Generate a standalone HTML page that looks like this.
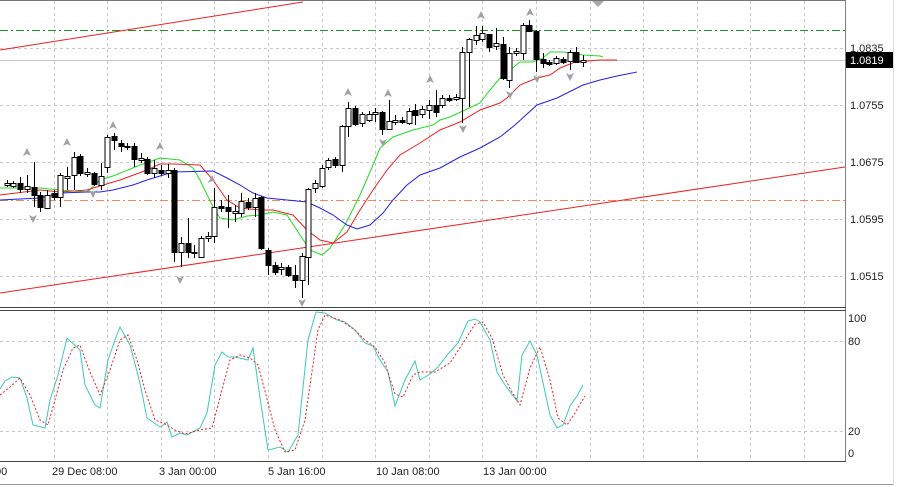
<!DOCTYPE html>
<html><head><meta charset="utf-8"><style>
html,body{margin:0;padding:0;background:#fff;}
svg{display:block;font-family:"Liberation Sans",Tahoma,sans-serif;}
</style></head><body>
<svg id="s" width="900" height="487" viewBox="0 0 900 487" xmlns="http://www.w3.org/2000/svg">
<rect width="900" height="487" fill="#fff"/>
<g id="grid" stroke="#c8c8c8" stroke-dasharray="3,3" stroke-width="1"></g>
<!-- frame -->
<line x1="845.5" y1="0" x2="845.5" y2="462" stroke="#808080"/>
<line x1="0" y1="307.5" x2="846" y2="307.5" stroke="#444"/>
<line x1="0" y1="310.5" x2="846" y2="310.5" stroke="#444"/>
<line x1="0" y1="461.5" x2="846" y2="461.5" stroke="#444"/>
<line x1="0" y1="0.5" x2="846" y2="0.5" stroke="#777"/>
<line x1="0" y1="484.5" x2="893" y2="484.5" stroke="#999"/>
<line x1="893.5" y1="0" x2="893.5" y2="485" stroke="#ddd"/>
<!-- levels -->
<line x1="0" y1="30.5" x2="845" y2="30.5" stroke="#1a9a1a" stroke-dasharray="8,3,2,3"/>
<line x1="0" y1="200.5" x2="845" y2="200.5" stroke="#f08a5a" stroke-dasharray="8,3,2,3"/>
<line x1="0" y1="60.5" x2="845" y2="60.5" stroke="#c8c8c8" stroke-width="1"/>
<line x1="0" y1="50" x2="303" y2="2" stroke="#f02020"/>
<line x1="0" y1="293" x2="845" y2="167" stroke="#f02020"/>
<g id="ma" fill="none" stroke-width="1"></g>
<g id="cd"></g>
<g id="ar" fill="#a0a0a0"></g>
<polygon points="592,1 604,1 598,7" fill="#a8a8a8"/>
<g id="st" fill="none"></g>
<!-- price labels -->
<g font-size="11" fill="#222">
<text x="850" y="52">1.0835</text>
<text x="850" y="109">1.0755</text>
<text x="850" y="166">1.0675</text>
<text x="850" y="223">1.0595</text>
<text x="850" y="280">1.0515</text>
<text x="848" y="322">100</text>
<text x="848" y="345">80</text>
<text x="848" y="435">20</text>
<text x="848" y="457">0</text>
<text x="-8" y="475">:00</text>
<text x="52" y="475">29 Dec 08:00</text>
<text x="159" y="475">3 Jan 00:00</text>
<text x="268" y="475">5 Jan 16:00</text>
<text x="376" y="475">10 Jan 08:00</text>
<text x="483" y="475">13 Jan 00:00</text>
</g>
<rect x="846" y="52" width="47" height="16" fill="#000"/>
<text x="850" y="64" font-size="11" fill="#fff">1.0819</text>
</svg>
<script>
var NS="http://www.w3.org/2000/svg";
function el(p,t,a){var e=document.createElementNS(NS,t);for(var k in a)e.setAttribute(k,a[k]);p.appendChild(e);return e;}
var g=document.getElementById('grid');
for(var i=1;i<16;i++){var x=Math.round(53.6*i)+0.5;el(g,'line',{x1:x,y1:1,x2:x,y2:307});el(g,'line',{x1:x,y1:311,x2:x,y2:461});}
[48,105,162,219,276].forEach(function(y){el(g,'line',{x1:0,y1:y+.5,x2:845,y2:y+.5});});
[341,431].forEach(function(y){el(g,'line',{x1:0,y1:y+.5,x2:845,y2:y+.5});});
function pl(p,pts,c,extra){var a={points:pts.map(function(q){return q.join(',')}).join(' '),stroke:c};for(var k in extra)a[k]=extra[k];el(p,'polyline',a);}
var ma=document.getElementById('ma');
pl(ma,[[0,188],[40,188],[60,190],[87,192],[100,180],[113,176],[140,165],[160,158],[180,160],[193,168],[200,180],[213,207],[220,218],[233,220],[247,216],[260,215],[273,212],[287,215],[300,235],[310,250],[322,255],[330,248],[345,225],[360,195],[373,165],[380,148],[393,137],[413,130],[433,125],[440,120],[450,117],[465,110],[480,103],[490,90],[500,78],[510,70],[520,62],[533,62],[543,58],[550,52],[563,52],[583,55],[600,56],[603,57]],'#20e020');
pl(ma,[[0,195],[40,190],[60,192],[87,190],[100,186],[120,180],[147,170],[160,164],[173,164],[200,165],[213,180],[227,200],[240,208],[260,210],[273,210],[293,215],[307,230],[320,240],[333,243],[347,232],[360,210],[373,190],[387,170],[400,155],[420,143],[440,130],[460,122],[480,110],[500,103],[507,98],[520,85],[537,78],[550,75],[560,68],[575,62],[600,60],[617,60]],'#f02020');
pl(ma,[[0,200],[40,198],[60,193],[87,192],[100,192],[113,190],[133,185],[147,180],[173,172],[213,171],[227,178],[240,185],[253,193],[267,198],[287,200],[307,202],[320,208],[333,215],[347,225],[357,229],[370,225],[383,213],[393,200],[407,185],[420,175],[440,168],[460,157],[480,148],[500,137],[515,125],[537,105],[557,98],[583,85],[600,80],[617,76],[637,72]],'#2020f0');
// candles: [i, top, bottom, wickTop, wickBot, bull]
var C=[[1,183,185,180,187,1],[2,183,186,181,188,1],[3,183,189,177,193,0],[4,186,189,175,193,1],[5,187,195,162,207,0],[6,195,207,192,212,0],[7,195,208,190,209,1],[8,193,197,190,200,0],[9,175,197,173,207,1],[10,176,178,167,190,1],[11,157,175,152,190,1],[12,156,173,154,176,0],[13,172,174,168,177,1],[14,173,184,172,186,0],[15,176,185,163,190,1],[16,137,167,135,173,1],[17,136,140,133,150,0],[18,143,146,140,152,0],[19,146,147,143,150,0],[20,146,159,143,167,0],[21,158,160,153,163,1],[22,159,173,157,175,0],[23,168,173,160,178,1],[24,170,173,165,176,0],[25,170,173,164,178,1],[26,170,252,168,262,0],[27,243,252,237,267,1],[28,243,252,218,258,0],[29,252,253,245,258,0],[30,238,257,236,258,1],[31,236,238,232,242,1],[32,207,236,188,243,1],[33,206,208,200,212,0],[34,207,211,195,228,0],[35,211,213,205,222,1],[36,201,213,193,217,1],[37,202,207,198,210,0],[38,198,207,193,217,1],[39,197,248,196,250,0],[40,250,265,248,275,0],[41,265,272,262,275,0],[42,267,269,263,275,1],[43,267,275,265,277,0],[44,275,280,265,288,0],[45,256,280,253,298,1],[46,189,257,188,285,1],[47,183,188,180,193,1],[48,168,186,165,188,1],[49,160,167,158,170,1],[50,159,165,157,168,0],[51,126,165,125,172,1],[52,108,126,102,137,1],[53,108,124,106,126,0],[54,114,123,112,127,1],[55,114,120,111,122,1],[56,112,114,108,122,1],[57,112,129,111,135,0],[58,121,129,100,130,1],[59,120,122,115,125,1],[60,120,122,117,124,0],[61,111,123,108,125,1],[62,110,115,104,125,0],[63,109,114,106,118,1],[64,105,110,100,119,1],[65,105,112,90,117,0],[66,98,105,95,108,1],[67,98,100,95,102,0],[68,97,99,94,101,1],[69,52,98,47,123,1],[70,39,52,38,107,1],[71,35,40,26,45,1],[72,33,39,26,42,1],[73,34,47,34,52,0],[74,43,46,28,50,1],[75,44,78,37,80,0],[76,53,80,47,88,1],[77,51,53,48,56,1],[78,25,53,23,60,1],[79,25,31,20,31,0],[80,31,59,30,72,0],[81,59,63,53,68,0],[82,62,64,60,66,0],[83,58,63,56,65,1],[84,59,62,57,64,0],[85,52,61,50,70,1],[86,52,62,47,63,0],[87,60,62,55,67,1]];
var cd=document.getElementById('cd');
C.forEach(function(c){var x=Math.round(6.7*c[0]);
el(cd,'line',{x1:x+.5,y1:c[3],x2:x+.5,y2:c[4],stroke:'#000'});
var h=Math.max(1,c[2]-c[1]);
if(c[5])el(cd,'rect',{x:x-2,y:c[1]+.5,width:5,height:h,fill:'#fff',stroke:'#000'});
else el(cd,'rect',{x:x-2.5,y:c[1],width:6,height:h+1,fill:'#000'});});
var ar=document.getElementById('ar');
function up(x,y){el(ar,'polygon',{points:(x)+','+(y-5)+' '+(x+4)+','+(y+3)+' '+x+','+(y+1)+' '+(x-4)+','+(y+3)});}
function dn(x,y){el(ar,'polygon',{points:(x)+','+(y+5)+' '+(x+4)+','+(y-3)+' '+x+','+(y-1)+' '+(x-4)+','+(y-3)});}
[[27,153],[67,143],[113,126],[160,147],[348,93],[388,94],[430,80],[481,16],[530,13],[212,180]].forEach(function(p){up(p[0],p[1]);});
[[33,218],[93,193],[180,279],[302,302],[383,142],[463,128],[510,94],[537,78],[570,76],[14,278]].forEach(function(p){if(p[0]!=14)dn(p[0],p[1]);});
var st=document.getElementById('st');
pl(st,[[0,389],[5,381],[12,377],[20,378],[27,398],[33,425],[45,428],[50,400],[58,375],[67,338],[80,350],[85,385],[95,405],[100,408],[108,360],[115,340],[120,327],[130,345],[140,383],[147,418],[160,427],[167,422],[172,437],[180,433],[187,435],[200,428],[207,413],[215,365],[222,352],[228,357],[235,357],[248,360],[253,348],[260,398],[268,450],[280,447],[288,452],[298,435],[308,340],[316,312],[325,313],[337,320],[345,322],[355,330],[365,343],[373,346],[380,360],[388,372],[395,406],[405,380],[415,361],[420,380],[430,374],[438,367],[448,354],[458,343],[468,321],[475,319],[480,322],[490,340],[497,372],[505,385],[517,401],[522,355],[530,341],[537,355],[550,415],[557,428],[563,425],[570,406],[577,396],[583,385]],'#40c8b8');
pl(st,[[0,395],[10,387],[20,378],[30,395],[40,420],[48,425],[55,400],[63,370],[73,348],[80,345],[90,372],[100,395],[110,370],[120,340],[128,335],[137,360],[145,390],[155,420],[165,424],[175,430],[185,434],[200,430],[212,428],[222,390],[230,360],[240,355],[250,358],[258,365],[266,395],[275,430],[285,452],[295,450],[305,420],[318,330],[325,315],[340,320],[355,330],[365,340],[375,347],[385,363],[395,394],[403,397],[413,375],[420,372],[435,372],[450,363],[465,340],[475,324],[483,322],[492,338],[503,375],[512,392],[520,405],[530,368],[540,347],[550,380],[558,418],[567,425],[575,413],[585,396]],'#f02020',{'stroke-dasharray':'2,2'});
</script>
</body></html>
